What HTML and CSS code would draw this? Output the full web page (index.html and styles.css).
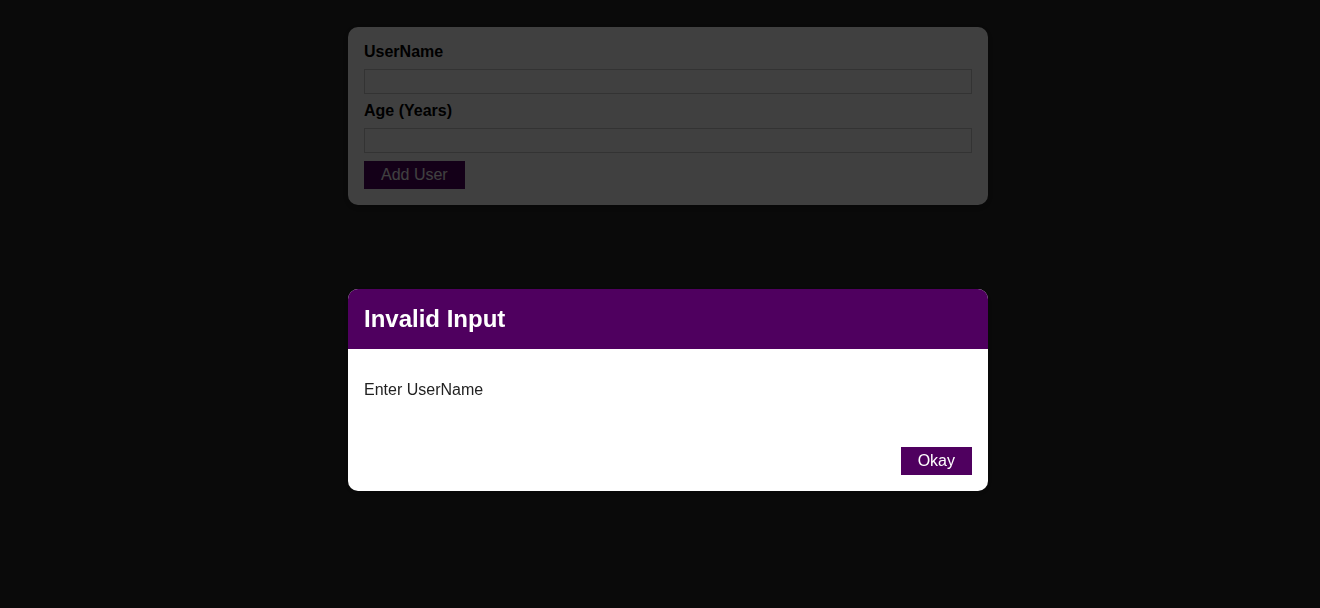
FILE: index.html
```html
<!DOCTYPE html>
<html lang="en">
<head>
<meta charset="utf-8">
<title>Add User</title>
<link rel="stylesheet" href="styles.css">
</head>
<body>
<main class="page">
  <form class="card input-form">
    <label class="field-label" for="username">UserName</label>
    <input class="field-input" id="username" type="text">
    <label class="field-label" for="age">Age (Years)</label>
    <input class="field-input" id="age" type="number">
    <button class="btn" type="button">Add User</button>
  </form>
</main>
<div class="backdrop"></div>
<div class="card modal">
  <header class="modal-header">
    <h2 class="modal-title">Invalid Input</h2>
  </header>
  <div class="modal-content">
    <p class="modal-text">Enter UserName</p>
  </div>
  <footer class="modal-actions">
    <button class="btn" type="button">Okay</button>
  </footer>
</div>
</body>
</html>
```

FILE: styles.css
```css
* { box-sizing: border-box; }

html {
  font-family: "Liberation Sans", Arial, sans-serif;
  font-size: 16px;
}

body {
  margin: 0;
  background: #292929;
  min-height: 100vh;
}

.page {
  padding-top: 27px;
}

.card {
  background: #ffffff;
  border-radius: 10px;
  box-shadow: 0 2px 8px rgba(0, 0, 0, 0.26);
}

.input-form {
  width: 640px;
  margin-left: calc(50% - 312px);
  padding: 16px;
}

.field-label {
  display: block;
  font-weight: bold;
  margin-bottom: 8px;
  line-height: 18px;
  color: #000;
}

.field-input {
  font: inherit;
  display: block;
  width: 100%;
  height: 25px;
  border: 1px solid #cccccc;
  padding: 2px;
  margin: 0 0 8px 0;
  background: #fff;
}

.btn {
  font: inherit;
  border: 1px solid #4f005f;
  background: #4f005f;
  color: #ffffff;
  padding: 4px 16px;
  height: 28px;
  line-height: 18px;
  cursor: pointer;
}

.backdrop {
  position: fixed;
  top: 0;
  left: 0;
  width: 100%;
  height: 100vh;
  z-index: 10;
  background: rgba(0, 0, 0, 0.75);
}

.modal {
  position: fixed;
  top: 289px;
  left: calc(50% - 312px);
  width: 640px;
  z-index: 100;
  overflow: hidden;
}

.modal-header {
  background: #4f005f;
  padding: 16px;
  height: 60px;
}

.modal-title {
  margin: 0;
  color: #ffffff;
  font-size: 24px;
  line-height: 28px;
  font-weight: bold;
}

.modal-content {
  padding: 16px;
}

.modal-text {
  margin: 16px 0;
  line-height: 18px;
  color: #222;
}

.modal-actions {
  padding: 16px;
  display: flex;
  justify-content: flex-end;
}
```
